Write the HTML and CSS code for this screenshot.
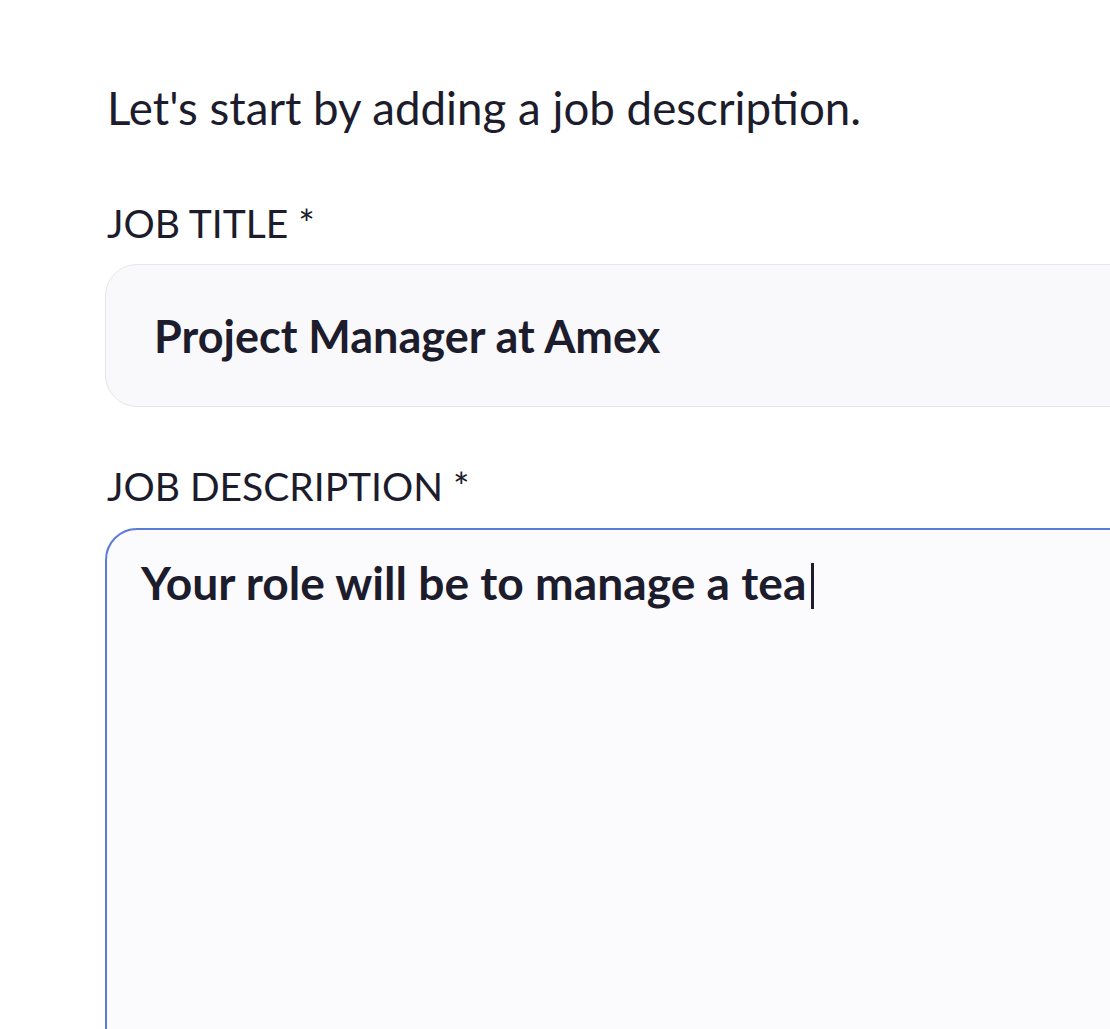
FILE: index.html
```html
<!DOCTYPE html>
<html lang="en">
<head>
    <meta charset="UTF-8">
    <meta name="viewport" content="width=device-width, initial-scale=1.0">
    <title>New Job</title>
    <link rel="stylesheet" href="styles.css">
</head>
<body>
    <div class="page">
        <p class="intro">Let's start by adding a job description.</p>

        <div class="field">
            <label class="field-label">Job title *</label>
            <div class="input">Project Manager at Amex</div>
        </div>

        <div class="field">
            <label class="field-label">Job description *</label>
            <div class="textarea focused">Your role will be to manage a tea<span class="caret"></span></div>
        </div>
    </div>
</body>
</html>
```

FILE: styles.css
```css
/* Base */
body {
    font-family: Lato, "Noto Sans", sans-serif;
    margin: 0;
    padding: 0;
    background-color: #ffffff;
    color: #1c1c2c;
    overflow: hidden;
}

.page {
    width: 1100px;
    padding: 76px 0 0 105px;
}

.intro {
    margin: 0 0 0 2px;
    font-size: 45.7px;
    line-height: 64px;
}

.field {
    margin-top: 59px;
}

.field + .field {
    margin-top: 55px;
}

.field-label {
    display: block;
    margin-left: 2px;
    font-size: 39px;
    line-height: 48px;
    text-transform: uppercase;
}

.input {
    margin-top: 17px;
    height: 141px;
    padding-left: 48px;
    display: flex;
    align-items: center;
    background-color: #f9f8fb;
    border: 1.5px solid #e6e5ea;
    border-radius: 32px;
    font-size: 45px;
    font-weight: 700;
}

.textarea {
    margin-top: 18px;
    height: 640px;
    padding: 22px 34px;
    background-color: #fbfafd;
    border: 2px solid #5b7bd6;
    border-radius: 32px;
    font-size: 46.2px;
    font-weight: 700;
    line-height: 60px;
}

.caret {
    display: inline-block;
    width: 3px;
    height: 46px;
    margin-left: 5px;
    vertical-align: -9px;
    background-color: #1c1c2c;
}
```
